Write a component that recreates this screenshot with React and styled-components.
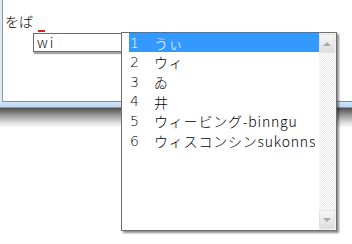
import styled, { createGlobalStyle } from 'styled-components';

const GlobalStyle = createGlobalStyle`
  html, body {
    margin: 0;
    padding: 0;
    background: #ffffff;
  }
  body {
    width: 352px;
    height: 244px;
    overflow: hidden;
    font-family: "Noto Sans CJK JP", "DejaVu Sans", sans-serif;
  }
`;

const candidates = [
  'うぃ',
  'ウィ',
  'ゐ',
  '井',
  'ウィービング-binngu',
  'ウィスコンシンsukonns',
];

const Screen = styled.div`
  position: relative;
  width: 352px;
  height: 244px;
  background: #ffffff;
`;

const Window = styled.div`
  display: flex;
  flex-direction: column;
`;

const Client = styled.div`
  height: 89px;
  margin-left: 2px;
  border-left: 1px solid #8c9aa8;
  border-bottom: 1px solid #7f8e9c;
  background: #ffffff;
  box-shadow: -2px 0 0 #dfe8f2;
  padding: 12px 0 0 2px;
  display: flex;
  flex-direction: column;
`;

const Frame = styled.div`
  height: 5px;
  background: linear-gradient(#d3e5f8, #bcd6f2);
  border-bottom: 1px solid #8a96a2;
`;

const FrameShadow = styled.div`
  height: 20px;
  background: linear-gradient(#4e4e4e, #8e8e8e 30%, #e0e0e0 75%, #ffffff);
`;

const Composition = styled.div`
  display: flex;
  align-items: flex-end;
  height: 18px;
  font-size: 14px;
  font-weight: 300;
  line-height: 18px;
  color: #000;
`;

const Caret = styled.span`
  display: inline-block;
  width: 7px;
  height: 2px;
  margin: 0 0 0 5px;
  background: #d8231d;
  transform: translateY(2px);
`;

const InputBox = styled.div`
  margin: 3px 0 0 28px;
  width: 100px;
  height: 17px;
  border: 1px solid #6d6d6d;
  box-shadow: 1px 2px 1px rgba(0, 0, 0, 0.35);
  background: #fff;
  padding-left: 3px;
  font-size: 14px;
  font-weight: 300;
  line-height: 17px;
  color: #111;
  letter-spacing: 2px;
`;

const Popup = styled.div`
  position: absolute;
  left: 121px;
  top: 32px;
  width: 214px;
  height: 197px;
  border: 1px solid #6e6e6e;
  background: #ffffff;
  box-shadow: 2px 2px 2px rgba(0, 0, 0, 0.45);
  display: flex;
`;

const List = styled.div`
  flex: 1;
  padding-left: 7px;
  overflow: hidden;
  display: flex;
  flex-direction: column;
`;

const Row = styled.div`
  display: flex;
  align-items: center;
  height: ${(p) => (p.$first ? '19px' : '19.8px')};
  white-space: nowrap;
  font-size: 14px;
  font-weight: 300;
  color: ${(p) => (p.$active ? '#ffffff' : '#000000')};
  background: ${(p) => (p.$active ? '#3399ff' : 'transparent')};
`;

const Num = styled.span`
  width: 24px;
  padding-left: 1px;
  font-family: "DejaVu Sans", sans-serif;
  font-weight: 300;
  font-size: 14px;
`;

const Word = styled.span`
  letter-spacing: 0.8px;
`;

const Scrollbar = styled.div`
  width: 17px;
  display: flex;
  flex-direction: column;
  justify-content: space-between;
  background: repeating-conic-gradient(#ebebeb 0 25%, #ffffff 0 50%) 0 0 / 2px 2px;
`;

const ArrowButton = styled.div`
  height: 17px;
  margin: 1px 1px 1px 0;
  border: 1px solid #e2e2e2;
  background: linear-gradient(#f6f6f6, #dedede);
  display: flex;
  align-items: center;
  justify-content: center;
`;

const Triangle = styled.div`
  width: 0;
  height: 0;
  border-left: 4px solid transparent;
  border-right: 4px solid transparent;
  ${(p) => (p.$down ? 'border-top: 4px solid #a8a8a8;' : 'border-bottom: 4px solid #a8a8a8;')}
`;

export default function App() {
  return (
    <Screen>
      <GlobalStyle />
      <Window>
        <Client>
          <Composition>
            をば<Caret />
          </Composition>
          <InputBox>wi</InputBox>
        </Client>
        <Frame />
        <FrameShadow />
      </Window>
      <Popup>
        <List>
          {candidates.map((c, i) => (
            <Row key={c} $active={i === 0} $first={i === 0}>
              <Num>{i + 1}</Num>
              <Word>{c}</Word>
            </Row>
          ))}
        </List>
        <Scrollbar>
          <ArrowButton>
            <Triangle />
          </ArrowButton>
          <ArrowButton>
            <Triangle $down />
          </ArrowButton>
        </Scrollbar>
      </Popup>
    </Screen>
  );
}
